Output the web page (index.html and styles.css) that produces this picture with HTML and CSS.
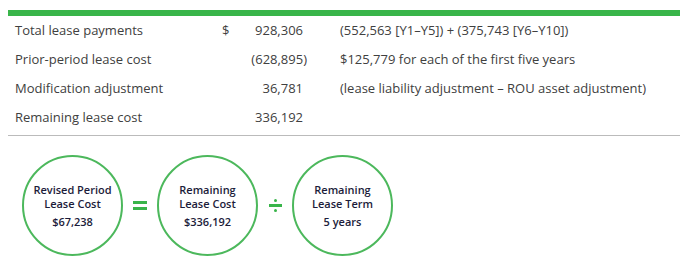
FILE: index.html
```html
<!DOCTYPE html>
<html>
<head>
<meta charset="utf-8">
<link rel="stylesheet" href="styles.css">
</head>
<body>
<div class="wrap">
  <div class="bar"></div>
  <div class="table">
    <div class="row">
      <span class="label">Total lease payments</span>
      <span class="cur">$</span>
      <span class="num pos">928,306</span>
      <span class="note">(552,563 [Y1–Y5]) + (375,743 [Y6–Y10])</span>
    </div>
    <div class="row">
      <span class="label">Prior-period lease cost</span>
      <span class="cur"></span>
      <span class="num">(628,895)</span>
      <span class="note">$125,779 for each of the first five years</span>
    </div>
    <div class="row">
      <span class="label">Modification adjustment</span>
      <span class="cur"></span>
      <span class="num pos">36,781</span>
      <span class="note">(lease liability adjustment – ROU asset adjustment)</span>
    </div>
    <div class="row">
      <span class="label">Remaining lease cost</span>
      <span class="cur"></span>
      <span class="num pos">336,192</span>
      <span class="note"></span>
    </div>
  </div>
  <div class="formula">
    <div class="circle">
      <div class="title">Revised Period<br>Lease Cost</div>
      <div class="value">$67,238</div>
    </div>
    <div class="op eq"><i></i><i></i></div>
    <div class="circle">
      <div class="title">Remaining<br>Lease Cost</div>
      <div class="value">$336,192</div>
    </div>
    <div class="op div"><b></b><i></i><b></b></div>
    <div class="circle">
      <div class="title">Remaining<br>Lease Term</div>
      <div class="value">5 years</div>
    </div>
  </div>
</div>
</body>
</html>
```
FILE: styles.css
```css
* { box-sizing: border-box; }
html, body { margin: 0; padding: 0; background: #fff; }
body { padding: 10px 12px 0 8px; font-family: "Open Sans", "Liberation Sans", sans-serif; }
.wrap { width: 672px; }
.bar { height: 6px; background: #39b54a; }
.table { padding: 0 0 3px 7px; border-bottom: 1px solid #bbbbbb; }
.row {
  display: grid;
  grid-template-columns: 207px 12px 73px 1fr;
  height: 29px;
  line-height: 29px;
  font-size: 13px;
  color: #404040;
}
.cur { text-align: left; }
.num { text-align: right; }
.num.pos { padding-right: 4px; }
.note { padding-left: 33px; white-space: nowrap; }
.formula {
  display: flex;
  align-items: center;
  gap: 10px;
  padding: 19px 0 0 14px;
}
.circle {
  width: 101px;
  height: 101px;
  border: 2px solid #4cb85c;
  border-radius: 50%;
  display: flex;
  flex-direction: column;
  align-items: center;
  justify-content: center;
  text-align: center;
  color: #1c1c3a;
  font-size: 11px;
  font-weight: 600;
  line-height: 14px;
}
.value { margin-top: 4px; }
.op { width: 14px; display: flex; flex-direction: column; align-items: center; }
.eq i { display: block; width: 14px; height: 3px; background: #39b54a; }
.eq i + i { margin-top: 3px; }
.div i { display: block; width: 13px; height: 3px; background: #39b54a; margin: 2px 0; }
.div b { display: block; width: 3px; height: 3px; border-radius: 50%; background: #39b54a; }
```
